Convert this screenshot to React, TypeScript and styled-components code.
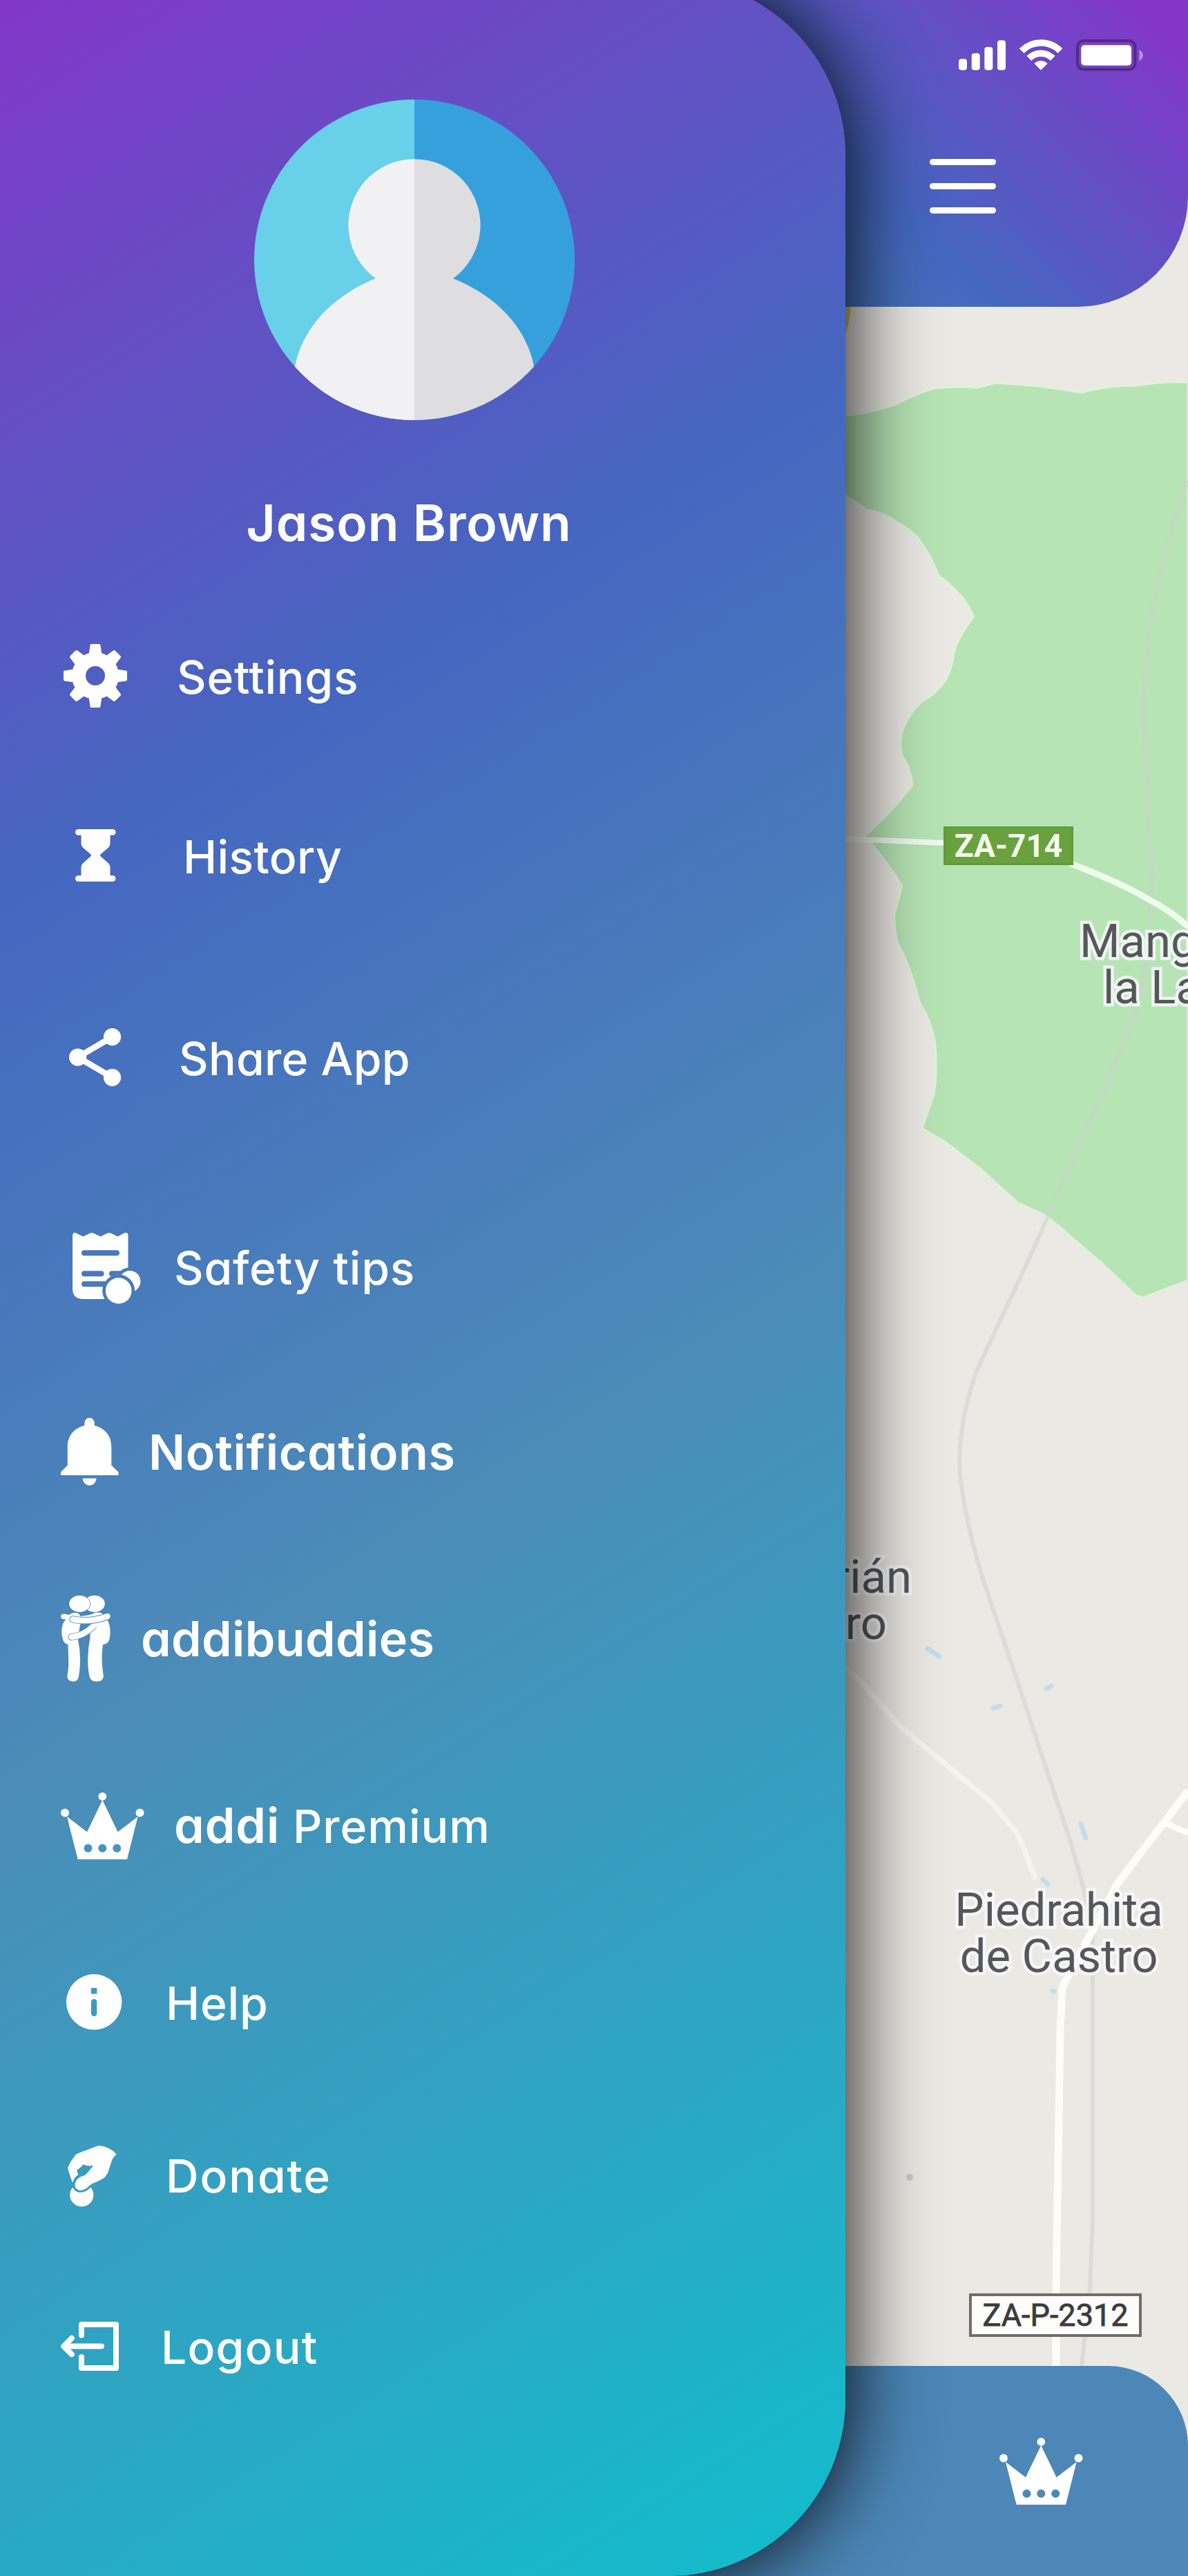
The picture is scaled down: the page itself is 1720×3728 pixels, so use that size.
import React from 'react';
import styled, { createGlobalStyle } from 'styled-components';

const GlobalStyle = createGlobalStyle`
  body { margin: 0; }
  *, *::before, *::after { box-sizing: border-box; }
`;

const sans = `Inter, 'Open Sans', sans-serif`;
const mapFont = `Roboto, 'Liberation Sans', sans-serif`;

const Screen = styled.main`
  position: relative;
  display: flex;
  flex-direction: column;
  justify-content: space-between;
  width: 1720px;
  height: 3728px;
  overflow: hidden;
  background: #eae9e4;
  font-family: ${sans};
`;

/* ---------- map ---------- */

const MapCanvas = styled.div`
  position: absolute;
  inset: 0;
`;

const Terrain = styled.svg`
  display: block;
`;

const Place = styled.div<{ $x: number; $y: number; $w: number; $align?: string }>`
  position: absolute;
  left: ${p => p.$x}px;
  top: ${p => p.$y}px;
  width: ${p => p.$w}px;
  text-align: ${p => p.$align ?? 'center'};
  font: 400 67px/67px ${mapFont};
  color: #56575b;
  white-space: nowrap;
  -webkit-text-stroke: 9px rgba(248, 248, 250, 0.85);
  paint-order: stroke fill;
`;

const PlaceLine = styled.div<{ $left?: number; $right?: number }>`
  padding-left: ${p => p.$left ?? 0}px;
  padding-right: ${p => p.$right ?? 0}px;
`;

const RoadSign = styled.div<{ $x: number; $y: number; $w: number; $h: number; $green?: boolean }>`
  position: absolute;
  left: ${p => p.$x}px;
  top: ${p => p.$y}px;
  width: ${p => p.$w}px;
  height: ${p => p.$h}px;
  display: flex;
  align-items: center;
  justify-content: center;
  font: ${p => (p.$green ? 700 : 400)} ${p => (p.$green ? 46 : 45)}px/1 ${mapFont};
  color: ${p => (p.$green ? '#f6fdec' : '#3b3b3d')};
  -webkit-text-stroke: ${p => (p.$green ? '0' : '0.8px #3b3b3d')};
  background: ${p => (p.$green ? '#69a13e' : '#fcfcfa')};
  border: ${p => (p.$green ? '3px solid #5f9a3c' : '4px solid #6f6e6a')};
`;

function MapView() {
  return (
    <MapCanvas>
      <Terrain width="1720" height="3728" viewBox="0 0 1720 3728" fill="none">
        <path
          d="M1180 604 L1224 601 Q1262 598 1299 584 Q1325 570 1352 562 Q1385 558 1414 561 L1442 554 L1507 559 L1566 568 Q1600 558 1645 558 Q1680 552 1720 553 V1853 L1655 1878 L1645 1875 L1593 1826 L1517 1761 L1473 1740 L1421 1693 L1369 1653 L1335 1633 Q1344 1606 1352 1584 Q1357 1560 1354 1510 Q1348 1476 1331 1450 Q1319 1400 1300 1366 Q1294 1346 1295 1322 L1306 1282 Q1290 1256 1266 1226 L1252 1210 Q1290 1176 1321 1136 Q1318 1110 1305 1092 Q1302 1070 1307 1056 Q1316 1032 1335 1015 Q1356 1004 1369 984 Q1378 968 1381 945 Q1386 924 1409 893 Q1400 864 1359 833 Q1346 800 1328 777 Q1312 762 1299 756 Q1280 742 1256 738 L1224 717 L1180 700 Z"
          fill="#b7e4b5"
          stroke="#e3f1dc"
          strokeWidth="3"
        />
        <path
          d="M1720 695 Q1672 830 1662 931 Q1655 990 1657 1060 Q1662 1160 1668 1280 Q1660 1440 1635 1492 Q1580 1620 1517 1761 Q1500 1800 1473 1858 L1414 1984 Q1390 2050 1389 2117 Q1391 2175 1421 2279 L1473 2433 L1528 2600 Q1570 2720 1582 2800 V3205 L1578 3314 L1566 3424"
          stroke="#cccfce"
          strokeOpacity="0.5"
          strokeWidth="6"
        />
        <g stroke="#f4f3ee" strokeWidth="8" strokeLinejoin="round">
          <path d="M1224 2412 Q1262 2448 1300 2496 L1435 2608 L1473 2653 L1500 2720" />
        </g>
        <g stroke="#fbfdf6" strokeLinejoin="round">
          <path d="M1180 1212 L1368 1220" strokeWidth="8" stroke="#f1faef" />
          <path d="M1550 1250 Q1620 1276 1662 1301 Q1695 1318 1720 1341" strokeWidth="9" stroke="#effbec" />
          <path d="M1720 2592 L1617 2727 L1538 2876 L1535 2938 L1529 3314 V3428" strokeWidth="11" />
          <path d="M1688 2639 L1720 2653" strokeWidth="9" />
        </g>
        <g stroke="#bcdcec" strokeWidth="7" strokeLinecap="round" opacity="0.85">
          <path d="M1343 2386 L1360 2397" />
          <path d="M1438 2472 L1448 2469" />
          <path d="M1515 2444 L1522 2440" />
          <path d="M1565 2640 L1572 2660" />
          <path d="M1510 2720 L1517 2727" />
          <path d="M1524 2881 L1526 2882" />
        </g>
        <circle cx="1317" cy="3151" r="5" fill="#c8c8c8" />
        <path d="M1224 444 H1232 L1228 470 L1224 484 Z" fill="#d8c468" />
      </Terrain>
      <RoadSign $x={1366} $y={1196} $w={188} $h={56} $green>ZA-714</RoadSign>
      <RoadSign $x={1403} $y={3319} $w={250} $h={63}>ZA-P-2312</RoadSign>
      <Place $x={1563} $y={1329} $w={200} $align="left">
        <PlaceLine>Mang</PlaceLine>
        <PlaceLine $left={34}>la La</PlaceLine>
      </Place>
      <Place $x={1120} $y={2249} $w={200} $align="right">
        <PlaceLine>rián</PlaceLine>
        <PlaceLine $right={36}>ro</PlaceLine>
      </Place>
      <Place $x={1373} $y={2731} $w={320}>
        <PlaceLine>Piedrahita</PlaceLine>
        <PlaceLine>de Castro</PlaceLine>
      </Place>
    </MapCanvas>
  );
}

/* ---------- header and footer ---------- */

const Header = styled.header`
  position: relative;
  display: flex;
  flex-direction: column;
  align-items: flex-end;
  height: 444px;
  padding-top: 57px;
  border-bottom-right-radius: 160px;
  background: linear-gradient(225deg, #8436c9 3.5%, #4567c0 33%, #4c8cb8 62%);
`;

const StatusBar = styled.div`
  display: flex;
  gap: 20px;
  height: 46px;
  padding-right: 65px;
`;

const MenuButton = styled.button`
  display: flex;
  flex-direction: column;
  justify-content: space-between;
  width: 96px;
  height: 79px;
  margin: 127px 278px 0 0;
  padding: 0;
  border: 0;
  background: none;
`;

const MenuBar = styled.span`
  height: 9px;
  border-radius: 5px;
  background: #fff;
`;

const Footer = styled.footer`
  position: relative;
  display: flex;
  justify-content: flex-end;
  height: 304px;
  padding: 104px 152px 0 0;
  border-top-right-radius: 116px;
  background: #4c87b8;
`;

/* ---------- drawer ---------- */

const Drawer = styled.aside`
  position: absolute;
  top: -31px;
  left: 0;
  width: 1224px;
  height: 3759px;
  border-radius: 0 256px 256px 0;
  background: linear-gradient(148deg, #8436c9 0%, #4567c0 29.5%, #4c8cb8 58%, #12bccc 99%);
  box-shadow: 0 0 128px #000;
  color: #fff;
`;

const Profile = styled.section`
  display: flex;
  flex-direction: column;
  align-items: center;
  gap: 111px;
  width: 1200px;
  padding-top: 175px;
`;

const UserName = styled.h1`
  margin: 0 16px 0 0;
  font-size: 73px;
  font-weight: 600;
  line-height: 76px;
  letter-spacing: 1px;
  font-feature-settings: 'cv11' 1;
`;

const Menu = styled.nav`
  display: flex;
  flex-direction: column;
  padding-top: 121px;
`;

const MenuRow = styled.a<{ $space: number; $inset: number; $gap: number }>`
  display: flex;
  align-items: center;
  height: 124px;
  margin-top: ${p => p.$space}px;
  padding-left: ${p => p.$inset}px;
  gap: ${p => p.$gap}px;
`;

const MenuLabel = styled.span<{ $strong?: boolean; $track: number; $nudge: number }>`
  padding-top: ${p => p.$nudge}px;
  font-size: ${p => (p.$strong ? 70 : 66)}px;
  font-weight: ${p => (p.$strong ? 600 : 500)};
  line-height: 80px;
  letter-spacing: ${p => p.$track}px;
  white-space: pre;
  font-feature-settings: 'cv11' 1;
`;

const Brand = styled.b`
  font-size: 70px;
  font-weight: 600;
`;

/* ---------- icons ---------- */

const Glyph = styled.svg`
  display: block;
  flex: none;
`;

const Avatar = () => (
  <Glyph width="464" height="464" viewBox="0 0 464 464">
    <clipPath id="disc"><circle cx="232" cy="232" r="232" /></clipPath>
    <clipPath id="left"><path d="M0 0H232V464H0z" /></clipPath>
    <g clipPath="url(#disc)">
      <path d="M0 0H232V464H0z" fill="#68d0e8" />
      <path d="M232 0H464V464H232z" fill="#36a0dd" />
      <path d="M176 259 A95.500 95.500 0 1 1 288 259 C350 284 395 330 405 387 L405 464 H59 V387 C70 330 114 284 176 259 Z" fill="#dedee0" />
      <path clipPath="url(#left)" d="M176 259 A95.500 95.500 0 1 1 288 259 C350 284 395 330 405 387 L405 464 H59 V387 C70 330 114 284 176 259 Z" fill="#f1f1f3" />
    </g>
  </Glyph>
);

const GearIcon = () => (
  <Glyph width="92" height="92" viewBox="-46 -46 92 92" fill="#fff">
    <circle r="24" fill="none" stroke="#fff" strokeWidth="20" />
    {[0, 45, 90, 135, 180, 225, 270, 315].map(a => (
      <path key={a} transform={`rotate(${a})`} d="M-10 -27 L-7.400 -44.500 Q-7.200 -46 -5.500 -46 H5.500 Q7.200 -46 7.400 -44.500 L10 -27 Z" />
    ))}
  </Glyph>
);

const HourglassIcon = () => (
  <Glyph width="59" height="76" viewBox="0 0 59 76" fill="#fff">
    <rect width="58.500" height="8.800" rx="4.400" />
    <rect y="67" width="58.500" height="8.800" rx="4.400" />
    <path d="M8.500 6V20Q8.500 25 12 27.500L22 36Q24 37.800 22 39.600L12 48.500Q8.500 51 8.500 56V70H50.500V56Q50.500 51 47 48.500L37 39.600Q35 37.800 37 36L47 27.500Q50.500 25 50.500 20V6Z" />
  </Glyph>
);

const ShareIcon = () => (
  <Glyph width="76" height="84" viewBox="0 0 76 84" fill="#fff">
    <path d="M62.500 12.700 L12.500 42 L62.500 71.300" fill="none" stroke="#fff" strokeWidth="8.600" />
    <circle cx="62.500" cy="12.700" r="12.600" />
    <circle cx="12.600" cy="42" r="12.600" />
    <circle cx="62.500" cy="71.300" r="12.600" />
  </Glyph>
);

const TipsIcon = () => (
  <Glyph width="99" height="103" viewBox="0 0 99 103" fill="#fff">
    <mask id="sheet">
      <path d="M0 0H99V103H0z" fill="#fff" />
      <g fill="#000">
        <rect x="13" y="25.300" width="55" height="8" rx="4" />
        <rect x="13" y="55.300" width="32.500" height="8" rx="4" />
        <rect x="53" y="55.300" width="22" height="8" rx="4" />
        <rect x="13" y="70.300" width="50" height="8" rx="4" />
        <circle cx="83" cy="70.500" r="20.300" />
        <circle cx="66.700" cy="84" r="23.500" />
      </g>
    </mask>
    <mask id="coin">
      <path d="M0 0H99V103H0z" fill="#fff" />
      <circle cx="66.700" cy="84" r="23.500" fill="#000" />
    </mask>
    <path mask="url(#sheet)" d="M0 4 Q0 0 4 0 Q6 .500 8 2 L15.500 5.500 L26 .600 Q28 0 30 .600 L40.500 5.500 L51 .600 Q53 0 55 .600 L65.500 5.500 L73 1.500 Q75 0 77 0 Q80.500 0 80.500 4 V96 H14 Q0 95 0 81 Z" />
    <circle cx="83" cy="70.500" r="15.400" mask="url(#coin)" />
    <circle cx="66.700" cy="84" r="18.800" />
  </Glyph>
);

const BellIcon = () => (
  <Glyph width="84" height="98" viewBox="0 0 84 98" fill="#fff">
    <path d="M34.400 11 V7 A7.200 7.200 0 0 1 48.800 7 V11 C64 15 73.300 26 73.300 42 V68.500 L83.500 78.500 V83 H0 V78.500 L9.800 68.500 V42 C9.800 26 19 15 34.400 11 Z" />
    <path d="M31.600 87.500 H51.600 A10 10.300 0 0 1 31.600 87.500 Z" />
  </Glyph>
);

const HugIcon = () => (
  <Glyph width="72" height="125" viewBox="0 0 72 125" fill="#fff">
    <ellipse cx="48.800" cy="12" rx="15" ry="11.900" />
    <ellipse cx="27.400" cy="12" rx="15.600" ry="12.400" fill="#4b8ab8" />
    <ellipse cx="27.200" cy="12" rx="15" ry="11.900" />
    <path d="M12 28 Q20 22 27 27 L30 36 Q27 45 26.500 52 L25 64 Q28 78 28 92 Q28 106 26 117 Q25 124.500 17.500 124.500 Q9 124 9.500 116 Q12 103 11 88 L10.500 71 Q5 69 3.500 65 Q1 58 1.200 50 Q2 40 7.500 34.500 Q0 35 0 30.500 Q0 27 4.500 26.500 Z" />
    <path d="M28 30 Q44 28.500 50 24.700 Q56 24 60 26 L68 36 Q72 45 71.500 54 Q71.500 64 68 68 Q65 71 61 71 Q59.500 82 59.500 92 Q60 106 62 117 Q61 124.500 52 124.500 Q43 124.500 41.500 117 Q39 106 39.200 92 Q39.500 76 42.500 61 L42.500 54 L46 42 L40 40 Z" />
    <g fill="none" strokeLinecap="round">
      <path d="M15.500 60 Q33 58.500 47 44.500" stroke="#4b8ab8" strokeWidth="10.200" />
      <path d="M15.500 60 Q33 58.500 48 43.500" stroke="#fff" strokeWidth="8.400" />
      <path d="M17.500 34.500 Q42 39.500 67 30.500" stroke="#4b8ab8" strokeWidth="10.400" />
      <path d="M17.500 34.500 Q42 39.500 67.500 30.200" stroke="#fff" strokeWidth="8.600" />
    </g>
  </Glyph>
);

const CrownIcon = ({ hole }: { hole: string }) => (
  <Glyph width="121" height="97" viewBox="0 0 121 97" fill="#fff">
    <circle cx="60.300" cy="5.900" r="5.900" />
    <circle cx="6" cy="29.600" r="6" />
    <circle cx="114.500" cy="29.600" r="6" />
    <path d="M9 35 L38 57.300 L60.300 11 L82.600 57.300 L111.600 35 L96 96.700 H24.600 Z" />
    <g fill={hole}>
      <circle cx="39.500" cy="80.700" r="6" />
      <circle cx="60.300" cy="80.700" r="6" />
      <circle cx="81.200" cy="80.700" r="6" />
    </g>
  </Glyph>
);

const InfoIcon = () => (
  <Glyph width="81" height="81" viewBox="0 0 81 81" fill="#fff">
    <circle cx="40.200" cy="40.300" r="40.200" />
    <g fill="#3f99be">
      <path d="M35.900 20H44.300V28.500H35.900z" />
      <rect x="35.900" y="36" width="8.400" height="25" rx="4.200" />
    </g>
  </Glyph>
);

const DonateIcon = () => (
  <Glyph width="71" height="89" viewBox="0 0 71 89" fill="#fff">
    <path d="M45 0 Q62 2 70.700 12.700 Q66 16 63.500 23 L58.300 39 Q55 46 50 48.500 Q42 53 35.700 55 Q31 58 26.700 62.300 Q22 65.500 17.500 65 Q10 63.500 10.500 57 Q10.500 50 19 45 Q25 44 28.500 39.500 L37.300 29 Q29 30.500 22.300 27.300 Q20.500 31 13.300 35.500 Q13.500 38 15.300 42.300 Q9 46.500 7 54 L1.700 38.500 L0 32.300 Q5 21 12.500 12.500 Q20 9 45 0 Z" />
    <path d="M7.300 60.500 A17 17 0 1 0 33.300 60.500 Q27 67.500 18.500 68 Q10.500 68 7.300 60.500 Z" />
  </Glyph>
);

const LogoutIcon = () => (
  <Glyph width="84" height="71" viewBox="0 0 84 71" fill="none" stroke="#fff" strokeWidth="8" strokeLinecap="round" strokeLinejoin="round">
    <path d="M30 19.500 V4 H80 V67 H30 V51" />
    <path d="M59 35.600 H4.500 M15.800 23.800 L4.200 35.600 L15.800 47.200" />
  </Glyph>
);

const SignalIcon = () => (
  <Glyph width="68" height="46" viewBox="0 0 68 46" fill="#fff">
    <rect x="0" y="28.300" width="12" height="16.200" rx="4" />
    <rect x="18.700" y="20" width="12" height="24.500" rx="4" />
    <rect x="37.300" y="11" width="12" height="33.500" rx="4" />
    <rect x="56" y="1.300" width="12" height="43.200" rx="4" />
  </Glyph>
);

const WifiIcon = () => (
  <Glyph width="62" height="46" viewBox="-31 -44.500 62 46">
    <g fill="none" stroke="#fff" strokeWidth="9.500">
      <path d="M-27.900 -27.900 A39.400 39.400 0 0 1 27.900 -27.900" />
      <path d="M-17.200 -17.200 A24.300 24.300 0 0 1 17.200 -17.200" />
    </g>
    <path d="M0 0 L-9.600 -9.600 A13.600 13.600 0 0 1 9.600 -9.600 Z" fill="#fff" />
  </Glyph>
);

const BatteryIcon = () => (
  <Glyph width="97" height="46" viewBox="0 0 97 46">
    <rect x="2" y="2" width="83.500" height="41.500" rx="9" fill="none" stroke="#512b86" strokeWidth="4" />
    <rect x="7.300" y="8.200" width="72.700" height="29.500" rx="5" fill="#fff" />
    <path d="M91.300 15 Q97 18 97 23 Q97 28 91.300 31 Z" fill="#b78be0" />
  </Glyph>
);

/* ---------- app ---------- */

type Item = {
  icon: React.ReactNode;
  label: React.ReactNode;
  space: number;
  inset: number;
  gap: number;
  track: number;
  strong?: boolean;
  nudge?: number;
};

const items: Item[] = [
  { icon: <GearIcon />, label: 'Settings', space: 0, inset: 92, gap: 72, track: 0.75 },
  { icon: <HourglassIcon />, label: 'History', space: 136, inset: 109, gap: 97, track: 0.4 },
  { icon: <ShareIcon />, label: 'Share App', space: 168, inset: 100, gap: 83, track: 0.3 },
  { icon: <TipsIcon />, label: 'Safety tips', space: 181, inset: 105, gap: 48, track: 0.8, nudge: -2 },
  { icon: <BellIcon />, label: 'Notifications', space: 142, inset: 88, gap: 43, track: 0.65, strong: true, nudge: 1 },
  { icon: <HugIcon />, label: 'addibuddies', space: 146, inset: 88, gap: 44, track: 0.35, strong: true, nudge: 1 },
  { icon: <CrownIcon hole="#4296bb" />, label: <><Brand>addi</Brand> Premium</>, space: 147, inset: 88, gap: 43, track: 1, nudge: -1 },
  { icon: <InfoIcon />, label: 'Help', space: 131, inset: 96, gap: 63, track: 0.8 },
  { icon: <DonateIcon />, label: 'Donate', space: 128, inset: 98, gap: 71, track: 1.9, nudge: 0 },
  { icon: <LogoutIcon />, label: 'Logout', space: 122, inset: 88, gap: 61, track: 1.2 },
];

export default function App() {
  return (
    <Screen>
      <GlobalStyle />
      <MapView />
      <Header>
        <StatusBar>
          <SignalIcon />
          <WifiIcon />
          <BatteryIcon />
        </StatusBar>
        <MenuButton aria-label="Menu">
          <MenuBar />
          <MenuBar />
          <MenuBar />
        </MenuButton>
      </Header>
      <Footer>
        <CrownIcon hole="#4c87b8" />
      </Footer>
      <Drawer>
        <Profile>
          <Avatar />
          <UserName>Jason Brown</UserName>
        </Profile>
        <Menu>
          {items.map((it, i) => (
            <MenuRow key={i} $space={it.space} $inset={it.inset} $gap={it.gap}>
              {it.icon}
              <MenuLabel $strong={it.strong} $track={it.track} $nudge={(it.nudge ?? 2) * 2}>
                {it.label}
              </MenuLabel>
            </MenuRow>
          ))}
        </Menu>
      </Drawer>
    </Screen>
  );
}
